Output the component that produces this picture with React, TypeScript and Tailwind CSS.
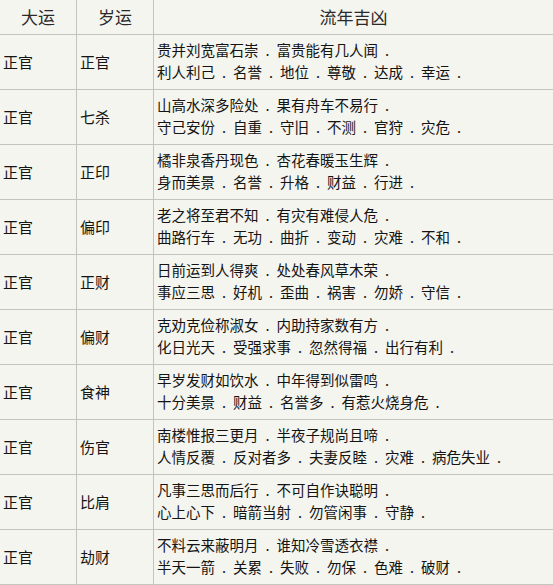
import React from "react";

const rows: [string, string, string, string][] = [
  ["正官", "正官", "贵并刘宽富石崇.富贵能有几人闻.", "利人利己.名誉.地位.尊敬.达成.幸运."],
  ["正官", "七杀", "山高水深多险处.果有舟车不易行.", "守己安份.自重.守旧.不测.官狩.灾危."],
  ["正官", "正印", "橘非泉香丹现色.杏花春暖玉生辉.", "身而美景.名誉.升格.财益.行进."],
  ["正官", "偏印", "老之将至君不知.有灾有难侵人危.", "曲路行车.无功.曲折.变动.灾难.不和."],
  ["正官", "正财", "日前运到人得爽.处处春风草木荣.", "事应三思.好机.歪曲.祸害.勿娇.守信."],
  ["正官", "偏财", "克劝克俭称淑女.内助持家数有方.", "化日光天.受强求事.忽然得福.出行有利."],
  ["正官", "食神", "早岁发财如饮水.中年得到似雷鸣.", "十分美景.财益.名誉多.有惹火烧身危."],
  ["正官", "伤官", "南楼惟报三更月.半夜子规尚且啼.", "人情反覆.反对者多.夫妻反睦.灾难.病危失业."],
  ["正官", "比肩", "凡事三思而后行.不可自作诀聪明.", "心上心下.暗箭当射.勿管闲事.守静."],
  ["正官", "劫财", "不料云来蔽明月.谁知冷雪透衣襟.", "半天一箭.关累.失败.勿保.色难.破财."],
];

function Line({ text }: { text: string }) {
  const parts = text.split(".");
  return (
    <div className="h-[22px] leading-[22px] whitespace-nowrap">
      {parts.map((p, i) =>
        i < parts.length - 1 ? (
          <React.Fragment key={i}>
            {p}
            <span className="inline-block w-[18px] text-center">.</span>
          </React.Fragment>
        ) : (
          <React.Fragment key={i}>{p}</React.Fragment>
        )
      )}
    </div>
  );
}

export default function App() {
  return (
    <div
      className="w-[553px] h-[585px] bg-[#f5f5ef] text-[#141414] overflow-hidden"
      style={{ fontFamily: '"Noto Sans CJK SC", "Noto Sans", sans-serif' }}
    >
      <div className="grid grid-cols-[77px_77px_1fr]">
        <div className="h-[35px] border-r border-b border-[#c4c4be] flex items-center justify-center text-[17px] text-[#2a2a2a]">
          大运
        </div>
        <div className="h-[35px] border-r border-b border-[#c4c4be] flex items-center justify-center text-[17px] text-[#2a2a2a]">
          岁运
        </div>
        <div className="h-[35px] border-b border-[#c4c4be] flex items-center justify-center text-[17px] text-[#2a2a2a]">
          流年吉凶
        </div>
        {rows.map((r, i) => (
          <React.Fragment key={i}>
            <div className="h-[55px] border-r border-b border-[#c4c4be] flex items-center pl-[3px] text-[15px]">
              {r[0]}
            </div>
            <div className="h-[55px] border-r border-b border-[#c4c4be] flex items-center pl-[3px] text-[15px]">
              {r[1]}
            </div>
            <div className="h-[55px] border-b border-[#c4c4be] flex flex-col justify-center pl-[3px] pb-[3px] text-[14.5px]">
              <Line text={r[2]} />
              <Line text={r[3]} />
            </div>
          </React.Fragment>
        ))}
      </div>
    </div>
  );
}
